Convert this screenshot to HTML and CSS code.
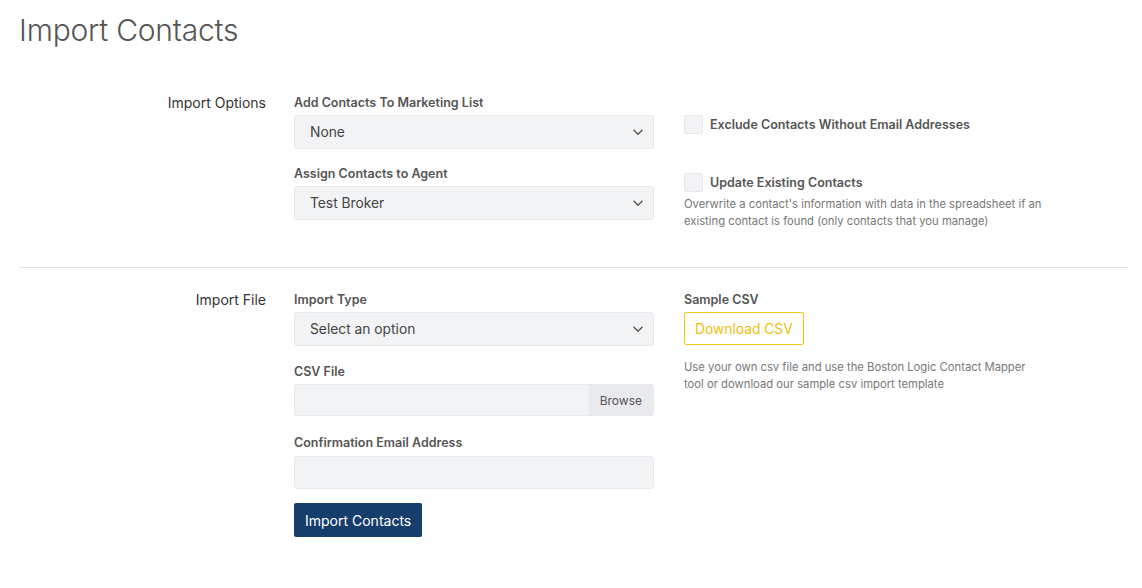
FILE: index.html
```html
<!DOCTYPE html>
<html lang="en">
<head>
    <meta charset="UTF-8">
    <meta name="viewport" content="width=device-width, initial-scale=1.0">
    <title>Import Contacts</title>
    <link rel="stylesheet" href="styles.css">
</head>
<body>
    <div class="page">
        <h1>Import Contacts</h1>

        <!-- Import options -->
        <section class="section">
            <div class="section-title">Import Options</div>
            <div class="fields">
                <div class="form-group">
                    <label for="marketingList">Add Contacts To Marketing List</label>
                    <div class="select">
                        <select id="marketingList">
                            <option>None</option>
                        </select>
                        <svg class="chevron" width="12" height="8" viewBox="0 0 12 8"><path d="M1.5 1.8 6 6.2 10.5 1.8" fill="none" stroke="#555" stroke-width="1.4"/></svg>
                    </div>
                </div>
                <div class="form-group">
                    <label for="agent">Assign Contacts to Agent</label>
                    <div class="select">
                        <select id="agent">
                            <option>Test Broker</option>
                        </select>
                        <svg class="chevron" width="12" height="8" viewBox="0 0 12 8"><path d="M1.5 1.8 6 6.2 10.5 1.8" fill="none" stroke="#555" stroke-width="1.4"/></svg>
                    </div>
                </div>
            </div>
            <div class="side">
                <div class="check-row first">
                    <span class="checkbox"></span>
                    <span class="check-label">Exclude Contacts Without Email Addresses</span>
                </div>
                <div class="check-row second">
                    <span class="checkbox"></span>
                    <span class="check-label">Update Existing Contacts</span>
                </div>
                <p class="help">Overwrite a contact's information with data in the spreadsheet if an existing contact is found (only contacts that you manage)</p>
            </div>
        </section>

        <!-- Import file -->
        <section class="section bordered">
            <div class="section-title">Import File</div>
            <div class="fields">
                <div class="form-group">
                    <label for="importType">Import Type</label>
                    <div class="select">
                        <select id="importType">
                            <option>Select an option</option>
                        </select>
                        <svg class="chevron" width="12" height="8" viewBox="0 0 12 8"><path d="M1.5 1.8 6 6.2 10.5 1.8" fill="none" stroke="#555" stroke-width="1.4"/></svg>
                    </div>
                </div>
                <div class="form-group csv-group">
                    <label>CSV File</label>
                    <div class="file-input">
                        <span class="file-name"></span>
                        <span class="browse">Browse</span>
                    </div>
                </div>
                <div class="form-group email-group">
                    <label for="email">Confirmation Email Address</label>
                    <input type="text" id="email" class="text-input">
                </div>
                <button type="button" class="btn-primary">Import Contacts</button>
            </div>
            <div class="side">
                <div class="side-label">Sample CSV</div>
                <button type="button" class="btn-outline">Download CSV</button>
                <p class="help sample-help">Use your own csv file and use the Boston Logic Contact Mapper tool or download our sample csv import template</p>
            </div>
        </section>
    </div>
</body>
</html>
```

FILE: styles.css
```css
body {
    margin: 0;
    padding: 0;
    background-color: #fff;
    color: #333;
    font-family: Inter, "Helvetica Neue", Arial, sans-serif;
}
.page {
    padding: 0 14px 0 19px;
}
h1 {
    margin: 0;
    padding-top: 10px;
    font-size: 30px;
    line-height: 40px;
    font-weight: 300;
    color: #555;
    letter-spacing: -0.2px;
}
.section {
    display: grid;
    grid-template-columns: 247px 360px 1fr;
    column-gap: 28px;
    padding: 44px 0 37px;
}
.section.bordered {
    border-top: 1px solid #e1e1e1;
    padding-top: 23px;
    padding-bottom: 40px;
}
.section-title {
    text-align: right;
    font-size: 14px;
    line-height: 18px;
    color: #333;
}
.form-group {
    margin-bottom: 16px;
}
.form-group:last-of-type {
    margin-bottom: 0;
}
.csv-group {
    margin-top: 17px;
}
.email-group {
    margin-top: 18px;
}
.email-group label {
    margin-bottom: 4px;
}
label, .side-label {
    display: block;
    font-size: 12.5px;
    line-height: 18px;
    font-weight: 600;
    color: #555;
    margin-bottom: 3px;
}
.select {
    position: relative;
}
select {
    appearance: none;
    -webkit-appearance: none;
    width: 100%;
    height: 34px;
    padding: 0 15px;
    background-color: #f2f3f5;
    border: 1px solid #e6e8eb;
    border-radius: 3px;
    font-family: inherit;
    font-size: 13.8px;
    color: #444;
}
.chevron {
    position: absolute;
    right: 10px;
    top: 13px;
    pointer-events: none;
}
.file-input {
    display: flex;
    height: 32px;
    background-color: #f2f3f5;
    border: 1px solid #e6e8eb;
    border-radius: 3px;
    box-sizing: border-box;
}
.file-name {
    flex: 1;
}
.browse {
    display: flex;
    align-items: center;
    padding: 0 11px;
    background-color: #e8eaed;
    font-size: 12px;
    color: #555;
}
.text-input {
    display: block;
    width: 100%;
    height: 33px;
    box-sizing: border-box;
    background-color: #f2f3f5;
    border: 1px solid #e6e8eb;
    border-radius: 3px;
}
.btn-primary {
    margin-top: 14px;
    height: 34px;
    padding: 0 11px;
    background-color: #163e6c;
    color: #fff;
    border: none;
    border-radius: 2px;
    font-family: inherit;
    font-size: 14px;
}
.side {
    padding-left: 2px;
}
.check-row {
    display: flex;
    align-items: center;
}
.check-row.first {
    margin-top: 21px;
}
.check-row.second {
    margin-top: 39px;
}
.checkbox {
    width: 19px;
    height: 19px;
    box-sizing: border-box;
    background-color: #f2f3f5;
    border: 1px solid #e6e8eb;
    border-radius: 2px;
}
.check-label {
    margin-left: 7px;
    font-size: 12.5px;
    font-weight: 600;
    color: #555;
}
.help {
    margin: 4px 0 0;
    max-width: 362px;
    font-size: 11.25px;
    line-height: 17px;
    color: #777;
}
.btn-outline {
    display: block;
    height: 33px;
    padding: 0 10px;
    background: #fff;
    border: 1px solid #f5c518;
    border-radius: 2px;
    color: #f0bf0c;
    font-family: inherit;
    font-size: 13.8px;
}
.sample-help {
    margin-top: 14px;
    max-width: 350px;
}
```
